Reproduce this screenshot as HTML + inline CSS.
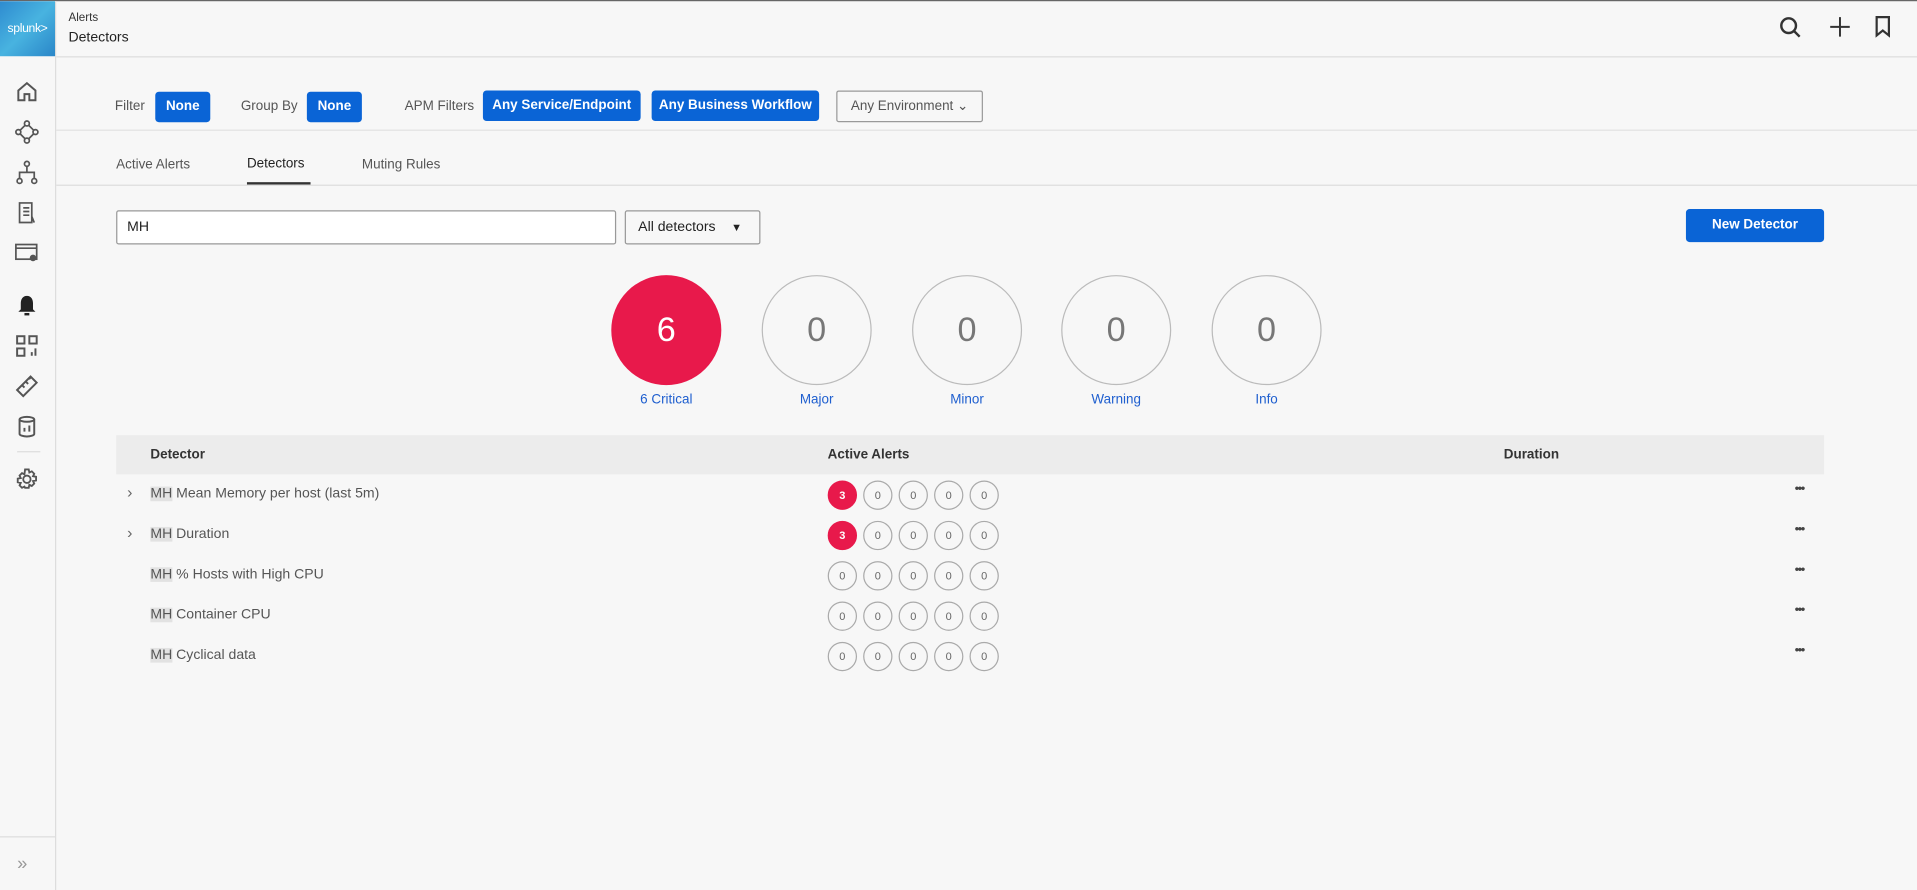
<!DOCTYPE html>
<html><head><meta charset="utf-8"><style>
html,body{margin:0;padding:0;width:1917px;height:890px;overflow:hidden;background:#f7f7f7;font-family:"Liberation Sans",sans-serif;}
#s{position:absolute;left:0;top:0;width:1568px;height:728px;transform:scale(1.22258);transform-origin:0 0;background:#f7f7f7;}
.a{position:absolute;}
.btn{position:absolute;background:#0a64d6;color:#fff;font-size:11px;font-weight:bold;border-radius:3px;height:25px;line-height:25px;text-align:center;}
.lbl{position:absolute;font-size:11px;color:#555;}
.big{position:absolute;width:88px;height:88px;border-radius:50%;border:1px solid #bbb;text-align:center;line-height:88px;font-size:28px;color:#777;top:225px;}
.bl{position:absolute;top:321px;font-size:11px;color:#1f5fcf;width:120px;text-align:center;}
.row{position:absolute;left:95px;width:1397px;height:33px;}
.nm{position:absolute;left:28px;top:9px;font-size:11.5px;color:#555;}
.mh{background:#e2e2e2;}
.sc{position:absolute;top:4px;width:22px;height:22px;border-radius:50%;border:1px solid #aaa;font-size:9px;line-height:22px;text-align:center;color:#666;}
.sc.r{background:#e8194b;border-color:#e8194b;color:#fff;font-weight:bold;}
.dots{position:absolute;left:1373px;top:6px;font-size:10px;color:#444;letter-spacing:-1px;font-weight:bold;}
.chev{position:absolute;left:9px;top:6px;font-size:13px;color:#666;}
.ic{position:absolute;left:12px;}
</style></head><body><div id="s">
<div class="a" style="left:0;top:0;width:1568px;height:1px;background:#666"></div>
<div class="a" style="left:0;top:1px;width:45px;height:727px;background:#f7f7f7;border-right:1px solid #ddd"></div>
<div class="a" style="left:0;top:1px;width:45px;height:45px;background:linear-gradient(135deg,#2e8bd0,#48b3e0 50%,#2a86c8);color:#fff;font-size:10px;line-height:45px;text-align:center;letter-spacing:-0.3px">splunk&gt;</div>
<div class="a" style="left:46px;top:46px;width:1522px;height:1px;background:#ddd"></div>
<div class="a" style="left:56px;top:9px;font-size:9.5px;color:#333">Alerts</div>
<div class="a" style="left:56px;top:25px;font-size:11.5px;color:#222">Detectors</div>
<svg class="a" style="left:1455px;top:13px" width="20" height="20" viewBox="0 0 20 20" fill="none" stroke="#333" stroke-width="2"><circle cx="8" cy="8" r="6"/><path d="M12.5 12.5L17 17"/></svg>
<svg class="a" style="left:1496px;top:13px" width="18" height="18" viewBox="0 0 18 18" stroke="#333" stroke-width="1.6"><path d="M9 1v16M1 9h16"/></svg>
<svg class="a" style="left:1533px;top:13px" width="14" height="18" viewBox="0 0 14 18" fill="none" stroke="#333" stroke-width="1.8"><path d="M2 1h10v15l-5-4-5 4z"/></svg>
<svg class="ic" style="top:65px" width="20" height="20" viewBox="0 0 20 20" fill="none" stroke="#555" stroke-width="1.6"><path d="M3 9l7-6 7 6v8h-5v-5h-4v5H3z"/></svg>
<svg class="ic" style="top:98px" width="20" height="20" viewBox="0 0 20 20" fill="none" stroke="#555" stroke-width="1.4"><circle cx="10" cy="3" r="2"/><circle cx="3" cy="10" r="2"/><circle cx="17" cy="10" r="2"/><circle cx="10" cy="17" r="2"/><path d="M8.5 4.5L4.5 8.5M11.5 4.5l4 4M4.5 11.5l4 4M15.5 11.5l-4 4"/></svg>
<svg class="ic" style="top:131px" width="20" height="20" viewBox="0 0 20 20" fill="none" stroke="#555" stroke-width="1.4"><circle cx="10" cy="3" r="2"/><circle cx="4" cy="17" r="2"/><circle cx="16" cy="17" r="2"/><path d="M10 5v5M4 15v-5h12v5"/></svg>
<svg class="ic" style="top:164px" width="20" height="20" viewBox="0 0 20 20" fill="none" stroke="#555" stroke-width="1.4"><path d="M4 2h10v16H4zM7 6h5M7 9h5M7 12h5M14 13l2 5"/></svg>
<svg class="ic" style="top:197px" width="20" height="20" viewBox="0 0 20 20" fill="none" stroke="#555" stroke-width="1.4"><rect x="1" y="3" width="17" height="12"/><path d="M1 6h17"/><circle cx="15" cy="14" r="2" fill="#555"/></svg>
<svg class="ic" style="top:240px" width="20" height="20" viewBox="0 0 20 20" fill="#222"><path d="M10 2c-3.5 0-5 3-5 6v5l-2 2h14l-2-2V8c0-3-1.5-6-5-6z"/><rect x="8" y="16" width="4" height="2"/></svg>
<svg class="ic" style="top:273px" width="20" height="20" viewBox="0 0 20 20" fill="none" stroke="#555" stroke-width="1.6"><rect x="2" y="2" width="6" height="6"/><rect x="12" y="2" width="6" height="6"/><rect x="2" y="12" width="6" height="6"/><path d="M14 15v3M17 12v6"/></svg>
<svg class="ic" style="top:306px" width="20" height="20" viewBox="0 0 20 20" fill="none" stroke="#555" stroke-width="1.6"><path d="M2 13L13 2l5 5L7 18z M6 9l2 2M9 6l2 2M12 3l1 1"/></svg>
<svg class="ic" style="top:339px" width="20" height="20" viewBox="0 0 20 20" fill="none" stroke="#555" stroke-width="1.6"><ellipse cx="10" cy="4" rx="6" ry="2"/><path d="M4 4v12c0 1 3 2 6 2s6-1 6-2V4M8 11v3M12 9v5"/></svg>
<div class="a" style="left:14px;top:369px;width:19px;height:1px;background:#ddd"></div>
<svg class="ic" style="top:382px" width="20" height="20" viewBox="0 0 20 20" fill="none" stroke="#555" stroke-width="1.5"><circle cx="10" cy="10" r="3"/><path d="M8.5 2h3l.5 2.5 2-1 2 2-1 2 2.5.5v3l-2.5.5 1 2-2 2-2-1-.5 2.5h-3L8 16l-2 1-2-2 1-2-2.5-.5v-3L5 9 4 7l2-2 2 1z"/></svg>
<div class="a" style="left:0;top:684px;width:45px;height:1px;background:#ddd"></div>
<div class="a" style="left:14px;top:698px;font-size:15px;color:#999">»</div>
<div class="lbl" style="left:94px;top:81px">Filter</div>
<div class="btn" style="left:127px;top:75px;width:45px">None</div>
<div class="lbl" style="left:197px;top:81px">Group By</div>
<div class="btn" style="left:251px;top:75px;width:45px">None</div>
<div class="lbl" style="left:331px;top:81px">APM Filters</div>
<div class="btn" style="left:395px;top:74px;width:129px">Any Service/Endpoint</div>
<div class="btn" style="left:533px;top:74px;width:137px">Any Business Workflow</div>
<div class="a" style="left:684px;top:74px;width:118px;height:24px;border:1px solid #999;border-radius:2px;font-size:11px;color:#555;line-height:24px;text-align:center">Any Environment ⌄</div>
<div class="a" style="left:46px;top:106px;width:1522px;height:1px;background:#e2e2e2"></div>
<div class="lbl" style="left:95px;top:129px">Active Alerts</div>
<div class="lbl" style="left:202px;top:128px;color:#222">Detectors</div>
<div class="a" style="left:202px;top:149px;width:52px;height:2px;background:#333"></div>
<div class="lbl" style="left:296px;top:129px">Muting Rules</div>
<div class="a" style="left:46px;top:151px;width:1522px;height:1px;background:#ddd"></div>
<div class="a" style="left:95px;top:172px;width:407px;height:26px;border:1px solid #999;border-radius:2px;background:#fff;font-size:11.5px;line-height:26px;text-indent:8px;color:#222">MH</div>
<div class="a" style="left:511px;top:172px;width:109px;height:26px;border:1px solid #999;border-radius:2px;font-size:11.5px;line-height:26px;text-indent:10px;color:#222">All detectors &nbsp;&nbsp; <span style="font-size:9px">▼</span></div>
<div class="btn" style="left:1379px;top:171px;width:113px;height:27px;line-height:27px">New Detector</div>
<div class="big" style="left:500px;background:#e8194b;border-color:#e8194b;color:#fff">6</div>
<div class="big" style="left:623px">0</div>
<div class="big" style="left:746px">0</div>
<div class="big" style="left:868px">0</div>
<div class="big" style="left:991px">0</div>
<div class="bl" style="left:485px">6 Critical</div>
<div class="bl" style="left:608px">Major</div>
<div class="bl" style="left:731px">Minor</div>
<div class="bl" style="left:853px">Warning</div>
<div class="bl" style="left:976px">Info</div>
<div class="a" style="left:95px;top:356px;width:1397px;height:32px;background:#ececec"></div>
<div class="a" style="left:123px;top:366px;font-size:11px;font-weight:bold;color:#333">Detector</div>
<div class="a" style="left:677px;top:366px;font-size:11px;font-weight:bold;color:#333">Active Alerts</div>
<div class="a" style="left:1230px;top:366px;font-size:11px;font-weight:bold;color:#333">Duration</div>

<div class="row" style="top:389px"><span class="chev">›</span><div class="nm"><span class="mh">MH</span> Mean Memory per host (last 5m)</div>
<div class="sc r" style="left:582px">3</div><div class="sc" style="left:611px">0</div><div class="sc" style="left:640px">0</div><div class="sc" style="left:669px">0</div><div class="sc" style="left:698px">0</div><div class="dots">•••</div></div>
<div class="row" style="top:422px"><span class="chev">›</span><div class="nm"><span class="mh">MH</span> Duration</div>
<div class="sc r" style="left:582px">3</div><div class="sc" style="left:611px">0</div><div class="sc" style="left:640px">0</div><div class="sc" style="left:669px">0</div><div class="sc" style="left:698px">0</div><div class="dots">•••</div></div>
<div class="row" style="top:455px"><div class="nm"><span class="mh">MH</span> % Hosts with High CPU</div>
<div class="sc" style="left:582px">0</div><div class="sc" style="left:611px">0</div><div class="sc" style="left:640px">0</div><div class="sc" style="left:669px">0</div><div class="sc" style="left:698px">0</div><div class="dots">•••</div></div>
<div class="row" style="top:488px"><div class="nm"><span class="mh">MH</span> Container CPU</div>
<div class="sc" style="left:582px">0</div><div class="sc" style="left:611px">0</div><div class="sc" style="left:640px">0</div><div class="sc" style="left:669px">0</div><div class="sc" style="left:698px">0</div><div class="dots">•••</div></div>
<div class="row" style="top:521px"><div class="nm"><span class="mh">MH</span> Cyclical data</div>
<div class="sc" style="left:582px">0</div><div class="sc" style="left:611px">0</div><div class="sc" style="left:640px">0</div><div class="sc" style="left:669px">0</div><div class="sc" style="left:698px">0</div><div class="dots">•••</div></div>
</div></body></html>
